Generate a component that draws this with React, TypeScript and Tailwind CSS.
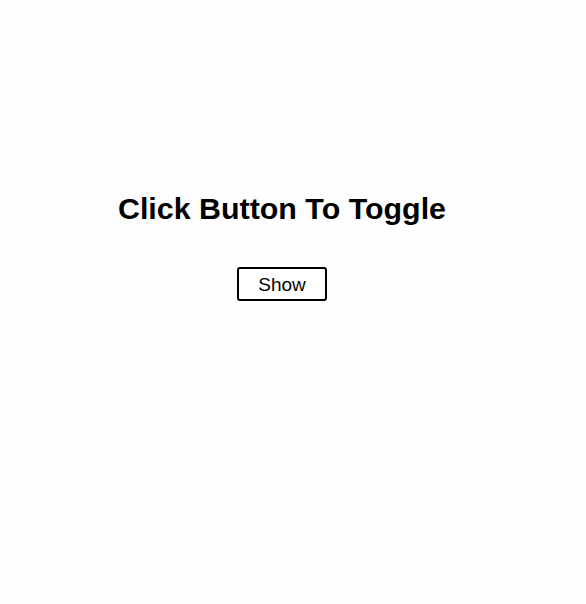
export default function App() {
  return (
    <div className="min-h-[604px] w-full bg-[#fefefe] bg-[radial-gradient(#fff7a8_0.6px,transparent_0.7px)] bg-[length:6px_6px] font-['Liberation_Sans',Arial,sans-serif] text-black">
      <div className="flex w-[564px] flex-col items-center pt-[190px]">
        <h1 className="text-[30.4px] leading-[36px] font-bold">Click Button To Toggle</h1>
        <button className="mt-[41px] h-[34px] w-[90px] rounded-[3px] border-2 border-black bg-white text-[19px] leading-none">
          Show
        </button>
      </div>
    </div>
  );
}
